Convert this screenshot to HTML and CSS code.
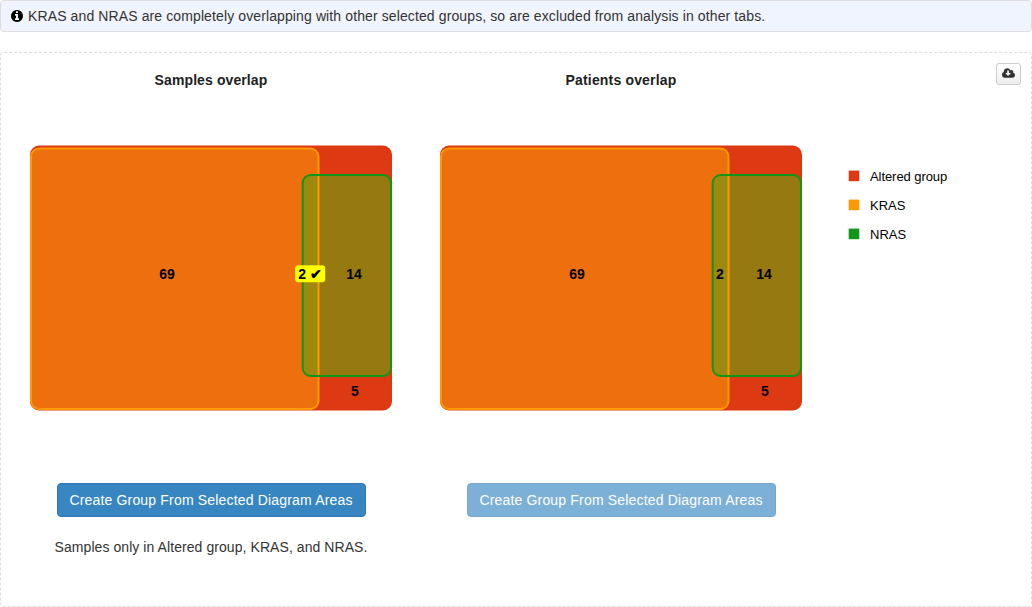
FILE: index.html
```html
<!DOCTYPE html>
<html lang="en">
<head>
<meta charset="utf-8">
<title>Group overlap</title>
<link rel="stylesheet" href="styles.css">
</head>
<body>
<div class="alert">
  <svg class="info-icon" viewBox="0 0 1536 1536"><path d="M1024 1248v-160q0-14-9-23t-23-9h-96V544q0-14-9-23t-23-9H544q-14 0-23 9t-9 23v160q0 14 9 23t23 9h96v320h-96q-14 0-23 9t-9 23v160q0 14 9 23t23 9h448q14 0 23-9t9-23zM896 352V192q0-14-9-23t-23-9H672q-14 0-23 9t-9 23v160q0 14 9 23t23 9h192q14 0 23-9t9-23zm640 416q0 209-103 385.500T1153.500 1433 768 1536t-385.500-103T103 1153.500 0 768t103-385.500T382.500 103 768 0t385.500 103T1433 382.500 1536 768z"/></svg>
  <span>KRAS and NRAS are completely overlapping with other selected groups, so are excluded from analysis in other tabs.</span>
</div>
<main class="panel">
  <section class="plot">
    <h2 class="title">Samples overlap</h2>
    <svg class="venn" width="364" height="268" viewBox="29 144 364 268">
      <defs>
        <clipPath id="kras-area"><rect x="31" y="148.500" width="287.500" height="260.500" rx="8"/></clipPath>
        <g id="regions">
          <rect class="altered" x="31" y="146.600" width="360" height="262.900" rx="8"/>
          <rect class="kras" x="31" y="148.500" width="287.500" height="260.500" rx="8"/>
          <rect class="nras" x="302.700" y="175" width="88.300" height="201" rx="8"/>
          <rect class="both" x="302.700" y="175" width="88.300" height="201" rx="8" clip-path="url(#kras-area)"/>
          <rect class="kras-line" x="31" y="148.500" width="287.500" height="260.500" rx="8"/>
          <rect class="nras-line" x="302.700" y="175" width="88.300" height="201" rx="8"/>
        </g>
      </defs>
      <use href="#regions"/>
      <rect class="selected" x="295.200" y="265.200" width="30" height="17" rx="3"/>
      <g class="count">
        <text x="167" y="279">69</text>
        <text x="310" y="279">2 ✔</text>
        <text x="354" y="279">14</text>
        <text x="355" y="396">5</text>
      </g>
    </svg>
    <button class="create">Create Group From Selected Diagram Areas</button>
    <p class="selection">Samples only in Altered group, KRAS, and NRAS.</p>
  </section>
  <section class="plot">
    <h2 class="title patients">Patients overlap</h2>
    <svg class="venn" width="364" height="268" viewBox="29 144 364 268">
      <use href="#regions"/>
      <g class="count">
        <text x="167" y="279">69</text>
        <text x="310" y="279">2</text>
        <text x="354" y="279">14</text>
        <text x="355" y="396">5</text>
      </g>
    </svg>
    <button class="create disabled" disabled>Create Group From Selected Diagram Areas</button>
  </section>
  <ul class="legend">
    <li><svg class="swatch" viewBox="0 0 12 12"><rect x=".7" y=".6" width="10.600" height="10.600" fill="#dc3912"/></svg><span class="long">Altered group</span></li>
    <li><svg class="swatch" viewBox="0 0 12 12"><rect x=".7" y=".6" width="10.600" height="10.600" fill="#ff9900"/></svg>KRAS</li>
    <li><svg class="swatch" viewBox="0 0 12 12"><rect x=".7" y=".6" width="10.600" height="10.600" fill="#109618"/></svg>NRAS</li>
  </ul>
  <button class="download" aria-label="Download">
    <svg class="cloud" viewBox="0 0 1920 1408"><path d="M1280 736q0-14-9-23t-23-9h-224V352q0-13-9.500-22.500T992 320H800q-13 0-22.500 9.500T768 352v352H544q-13 0-22.500 9.500T512 736q0 14 9 23l352 352q9 9 23 9t23-9l351-351q10-12 10-24zm640 288q0 159-112.500 271.500T1536 1408H448q-185 0-316.500-131.500T0 960q0-130 70-240t188-165q-2-30-2-43 0-212 150-362T768 0q156 0 285.500 87T1242 318q71-62 166-62 106 0 181 75t75 181q0 76-41 138 130 31 213.500 135.500T1920 1024z"/></svg>
  </button>
</main>
</body>
</html>
```
FILE: styles.css
```css
* { box-sizing: border-box; }
body {
  margin: 0;
  color: #333;
  font: 14px/20px "Liberation Sans", Arial, sans-serif;
}
.alert {
  display: flex;
  align-items: center;
  height: 32px;
  padding: 0 10px;
  border: 1px solid #ddd;
  border-radius: 4px;
  background: #f0f4fe;
  letter-spacing: .113px;
}
.info-icon { width: 12px; height: 12px; margin-right: 5px; fill: #000; }
.panel {
  position: relative;
  display: flex;
  height: 555px;
  margin-top: 20px;
  padding: 17px 0 0 28px;
  border: 1px dashed #ddd;
  border-radius: 4px;
}
.plot {
  display: flex;
  flex-direction: column;
  align-items: center;
  width: 364px;
  margin-right: 46px;
}
.title { margin: 0; font-size: 14px; line-height: 20px; font-weight: bold; letter-spacing: .1px; color: #222; }
.patients { letter-spacing: .17px; }
.venn { display: block; flex: none; margin-top: 54px; }
.altered { fill: #dd3912; stroke: #dc3912; stroke-width: 2; }
.kras { fill: #ee6f0d; }
.nras { fill: #977911; }
.both { fill: #9c8a10; }
.kras-line, .nras-line { fill: none; stroke-width: 2; }
.kras-line { stroke: #ff9900; }
.nras-line { stroke: #109618; }
.selected { fill: #ff0; }
.count { font-size: 14px; font-weight: bold; text-anchor: middle; fill: #000; }
.create {
  width: 309px;
  height: 34px;
  margin-top: 71px;
  padding: 0;
  border: 1px solid #2e77b0;
  border-radius: 4px;
  background: #3786c2;
  color: #fff;
  font: inherit;
  letter-spacing: .175px;
  white-space: nowrap;
}
.disabled { opacity: .65; }
.selection { margin: 20px 0 0; letter-spacing: .07px; white-space: nowrap; }
.legend {
  margin: 97px 0 0 -1px;
  padding: 0;
  list-style: none;
  color: #000;
  font-size: 13px;
}
.legend li { display: flex; align-items: center; height: 20px; margin-bottom: 9px; }
.long { letter-spacing: -.07px; }
.swatch { width: 12px; height: 12px; margin: 0 10px 2px 0; }
.download {
  position: absolute;
  top: 10px;
  right: 10px;
  display: flex;
  align-items: center;
  justify-content: center;
  width: 25px;
  height: 22px;
  padding: 0 0 2px;
  border: 1px solid #ccc;
  border-radius: 3px;
  background: linear-gradient(#fff, #eee);
}
.cloud { width: 13px; height: 10px; fill: #333; }
```
